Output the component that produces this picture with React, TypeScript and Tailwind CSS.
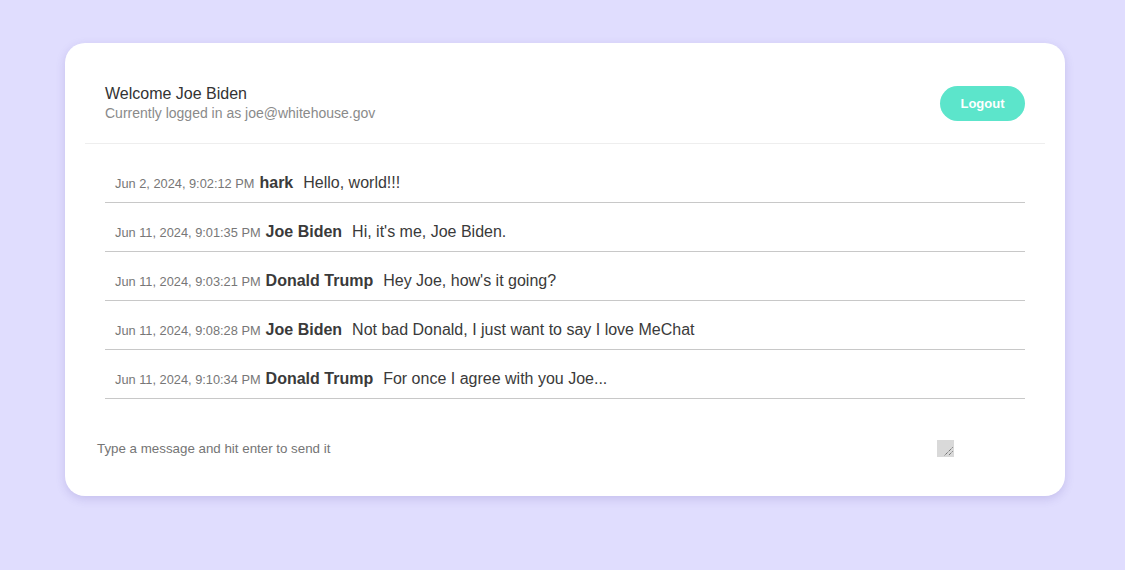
import React from "react";

const messages = [
  { time: "Jun 2, 2024, 9:02:12 PM", name: "hark", text: "Hello, world!!!" },
  { time: "Jun 11, 2024, 9:01:35 PM", name: "Joe Biden", text: "Hi, it's me, Joe Biden." },
  { time: "Jun 11, 2024, 9:03:21 PM", name: "Donald Trump", text: "Hey Joe, how's it going?" },
  { time: "Jun 11, 2024, 9:08:28 PM", name: "Joe Biden", text: "Not bad Donald, I just want to say I love MeChat" },
  { time: "Jun 11, 2024, 9:10:34 PM", name: "Donald Trump", text: "For once I agree with you Joe..." },
];

export default function App() {
  return (
    <div
      className="min-h-[570px] w-full bg-[#e0ddfe] pt-[43px]"
      style={{ fontFamily: '"Liberation Sans", Arial, sans-serif' }}
    >
      <div className="ml-[65px] w-[1000px] rounded-[20px] bg-white px-5 pt-[21px] shadow-[0_3px_10px_rgba(80,60,160,0.18)]">
        <div className="flex items-center justify-between border-b border-[#eeeeee] px-5 pt-5 pb-5">
          <div>
            <div className="text-[16px] leading-[20px] text-[#333]">Welcome Joe Biden</div>
            <div className="text-[14px] leading-[19px] text-[#8a8a8a]">Currently logged in as joe@whitehouse.gov</div>
          </div>
          <button className="h-[35px] w-[85px] rounded-full bg-[#5ce5cb] text-[13px] font-bold text-white">
            Logout
          </button>
        </div>
        <div className="px-5 pt-[10px]">
          {messages.map((m, i) => (
            <div key={i} className="flex items-center border-b border-[#c8c8c8] px-[10px] pt-[17px] pb-[7px] h-[49px] box-border">
              <span className="text-[12.8px] text-[#777] mr-[5px] leading-[24px] pt-[2px]">{m.time}</span>
              <span className="text-[16px] font-bold text-[#3a3a3a] mr-[10px] leading-[24px]">{m.name}</span>
              <span className="text-[16px] text-[#3a3a3a] leading-[24px]">{m.text}</span>
            </div>
          ))}
        </div>
        <div className="flex pt-[39px] pb-[38px] pl-[10px]">
          <div className="flex h-[20px] w-[859px] items-end justify-between">
            <span className="self-start pl-[2px] pt-[3px] text-[13.333px] leading-[15px] text-[#757575]">
              Type a message and hit enter to send it
            </span>
            <div className="mb-[1px] h-[17px] w-[17px] bg-[#d9d9d9]">
              <svg width="17" height="17" viewBox="0 0 17 17">
                <path d="M15.5 7.5 L7.5 15.5 M15.5 11.5 L11.5 15.5" stroke="#444" strokeWidth="1" strokeDasharray="1 1" />
              </svg>
            </div>
          </div>
        </div>
      </div>
    </div>
  );
}
